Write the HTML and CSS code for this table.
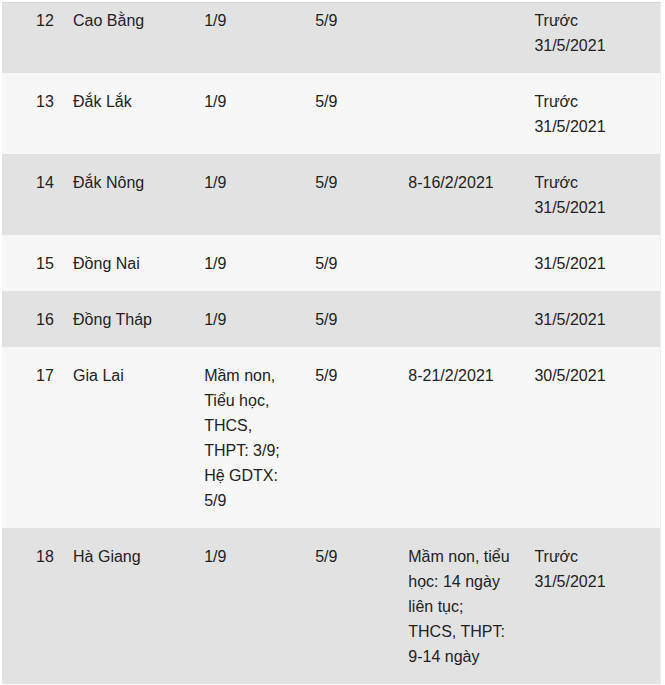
FILE: index.html
```html
<!DOCTYPE html>
<html lang="vi">
<head>
<meta charset="utf-8">
<title>Bảng</title>
<link rel="stylesheet" href="styles.css">
</head>
<body>
<table class="tbl">
  <tbody>
    <tr class="dark first">
      <td class="c1">12</td><td class="c2">Cao Bằng</td><td class="c3">1/9</td><td class="c4">5/9</td><td class="c5"></td><td class="c6">Trước 31/5/2021</td>
    </tr>
    <tr class="light">
      <td class="c1">13</td><td class="c2">Đắk Lắk</td><td class="c3">1/9</td><td class="c4">5/9</td><td class="c5"></td><td class="c6">Trước 31/5/2021</td>
    </tr>
    <tr class="dark">
      <td class="c1">14</td><td class="c2">Đắk Nông</td><td class="c3">1/9</td><td class="c4">5/9</td><td class="c5">8-16/2/2021</td><td class="c6">Trước 31/5/2021</td>
    </tr>
    <tr class="light">
      <td class="c1">15</td><td class="c2">Đồng Nai</td><td class="c3">1/9</td><td class="c4">5/9</td><td class="c5"></td><td class="c6">31/5/2021</td>
    </tr>
    <tr class="dark">
      <td class="c1">16</td><td class="c2">Đồng Tháp</td><td class="c3">1/9</td><td class="c4">5/9</td><td class="c5"></td><td class="c6">31/5/2021</td>
    </tr>
    <tr class="light">
      <td class="c1">17</td><td class="c2">Gia Lai</td><td class="c3">Mầm non, Tiểu học, THCS, THPT: 3/9; Hệ GDTX: 5/9</td><td class="c4">5/9</td><td class="c5">8-21/2/2021</td><td class="c6">30/5/2021</td>
    </tr>
    <tr class="dark">
      <td class="c1">18</td><td class="c2">Hà Giang</td><td class="c3">1/9</td><td class="c4">5/9</td><td class="c5">Mầm non, tiểu học: 14 ngày liên tục; THCS, THPT: 9-14 ngày</td><td class="c6">Trước 31/5/2021</td>
    </tr>
  </tbody>
</table>
</body>
</html>
```
FILE: styles.css
```css
html, body {
  margin: 0;
  padding: 0;
  background: #ffffff;
}

body {
  font-family: "Liberation Sans", Arial, sans-serif;
  font-size: 16px;
  line-height: 25px;
  color: #222222;
}

.tbl {
  margin: 2px 0 0 2px;
  width: 659px;
  table-layout: fixed;
  border-collapse: collapse;
  border-top: 1px solid #d6d6d6;
  border-right: 1px solid #ececec;
}

.tbl td {
  box-sizing: border-box;
  vertical-align: top;
  text-align: left;
  padding: 16px 0 15px 0;
}

.tbl .first td {
  padding-top: 5px;
}

.dark td {
  background: #e2e2e2;
}

.light td {
  background: #f7f7f7;
}

.tbl .c1 { width: 71px; padding-left: 34px; }
.tbl .c2 { width: 131px; }
.tbl .c3 { width: 111px; padding-right: 16px; }
.tbl .c4 { width: 93px; }
.tbl .c5 { width: 126px; padding-right: 21px; }
.tbl .c6 { width: 126px; padding-right: 24px; }
```
